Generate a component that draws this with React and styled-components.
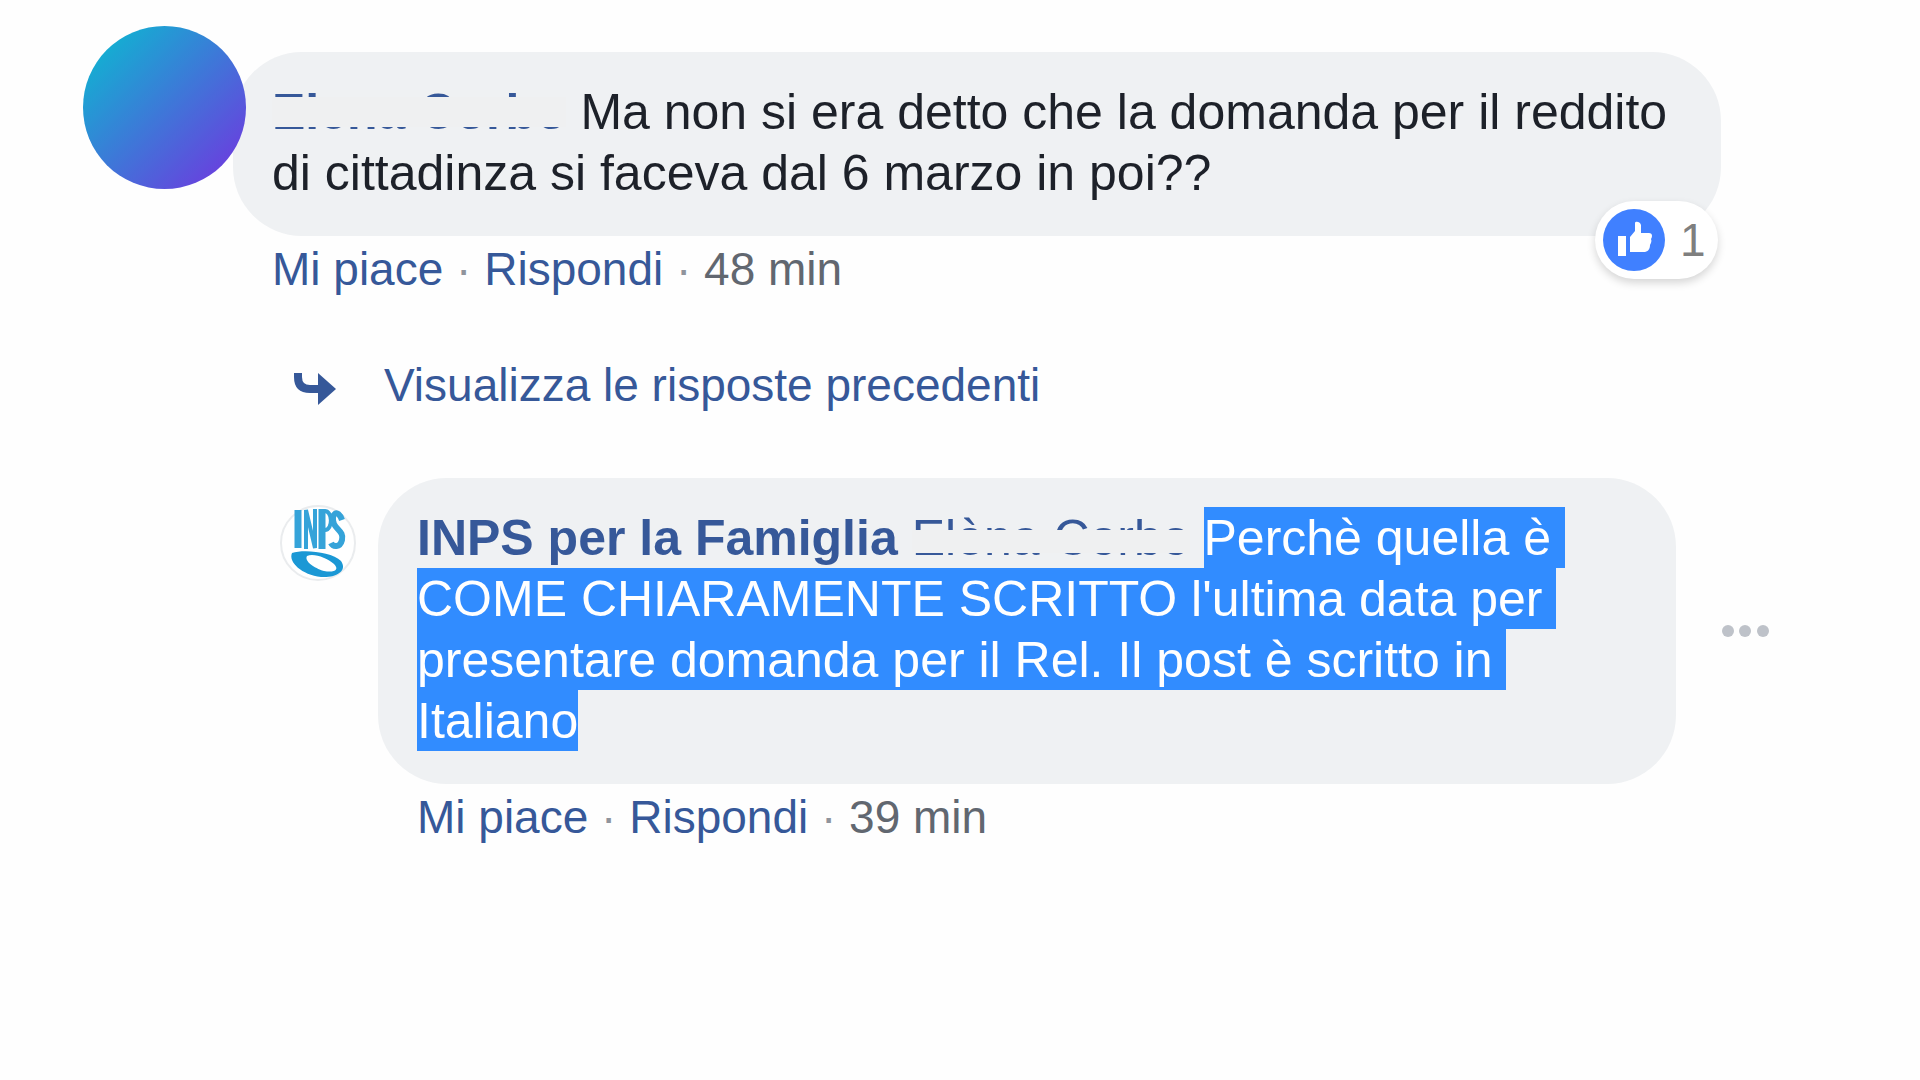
import React from "react";
import styled, { createGlobalStyle } from "styled-components";

const GlobalStyle = createGlobalStyle`
    *, *::before, *::after {
        box-sizing: border-box;
    }

    body {
        background: #fefefe;
        font-family: "Liberation Sans", Arial, sans-serif;
        margin: 0;
    }
`;

const Thread = styled.main`
    display: flex;
    flex-direction: column;
    padding: 26px 199px 40px 83px;
`;

const Comment = styled.article`
    align-items: flex-start;
    display: flex;
`;

const Reply = styled(Comment)`
    margin-left: 197px;
`;

const Avatar = styled.div`
    background: linear-gradient(135deg, #06c0d0, #7530e0);
    border-radius: 50%;
    flex: none;
    height: 163px;
    position: relative;
    width: 163px;
    z-index: 1;
`;

const PageAvatar = styled.svg`
    flex: none;
    height: 76px;
    margin-top: 27px;
    width: 76px;
`;

const Body = styled.div`
    flex: 1;
    margin: ${({ $nested }) => ($nested ? "0 0 0 22px" : "26px 0 0 -13px")};
    min-width: 0;
`;

const Bubble = styled.div`
    background: #eff1f3;
    border-radius: 69px;
    padding: 30px 39px 32px;
    position: relative;
`;

const Message = styled.p`
    color: #1d2129;
    font-size: 50px;
    line-height: 61px;
    margin: 0;
    white-space: pre-wrap;
`;

const Author = styled.a`
    color: #365899;
    font-weight: 700;
    text-decoration: none;
`;

/* name with a strip painted over its letters */
const HiddenName = styled.a`
    color: #365899;
    display: inline-block;
    font-weight: ${({ $bold }) => ($bold ? 700 : 400)};
    position: relative;
    text-decoration: none;

    &::after {
        background: #eff0f1;
        bottom: 16px;
        content: "";
        left: 0;
        position: absolute;
        right: 0;
        top: ${({ $bold }) => ($bold ? "15px" : "22px")};
    }
`;

const Selected = styled.mark`
    background: #318cff;
    box-decoration-break: clone;
    -webkit-box-decoration-break: clone;
    color: #fff;
    padding: 3px 0 2px;
`;

const Actions = styled.footer`
    color: #90949c;
    font-size: 46px;
    line-height: 50px;
    margin: 8px 0 0 39px;
`;

const ActionLink = styled.a`
    color: #365899;
    text-decoration: none;
`;

const Time = styled.time`
    color: #616770;
`;

const Reactions = styled.button`
    align-items: center;
    background: #fff;
    border: 0;
    border-radius: 39px;
    bottom: -43px;
    box-shadow: 0 4px 8px rgba(0, 0, 0, 0.16);
    color: #7f7f7f;
    display: flex;
    font-family: inherit;
    font-size: 46px;
    gap: 15px;
    height: 78px;
    padding: 0 8px;
    position: absolute;
    right: 3px;
    width: 123px;
`;

const LikeIcon = styled.svg`
    flex: none;
    height: 62px;
    width: 62px;
`;

const PreviousReplies = styled.a`
    align-items: center;
    color: #365899;
    display: flex;
    font-size: 46px;
    gap: 48px;
    line-height: 50px;
    margin: 66px 0 68px 211px;
    text-decoration: none;
`;

const ArrowIcon = styled.svg`
    flex: none;
    height: 32px;
    margin-top: 8px;
    width: 42px;
`;

const ReplyRow = styled.div`
    align-items: center;
    display: flex;
    /* the menu button hangs past the column of bubbles */
    margin-right: -48px;
`;

const MoreButton = styled.button`
    background: none;
    border: 0;
    display: flex;
    flex: none;
    margin-left: 46px;
    padding: 0;
`;

function CommentActions({ time }){
    return (
        <Actions>
            <ActionLink href="#">Mi piace</ActionLink> · <ActionLink href="#">Rispondi</ActionLink> · <Time>{time}</Time>
        </Actions>
    );
}

function InpsLogo(){
    return (
        <PageAvatar viewBox="0 0 76 76" role="img" aria-label="INPS">
            <circle cx="38" cy="38" r="37" fill="#fff" stroke="#eaecee" strokeWidth="2" />
            <g fill="none" stroke="#35a3d9">
                <path d="M18 5V43" strokeWidth="7" />
                <path d="M26 44V5L35 43V4" strokeWidth="4" />
                <path d="M42 44V4" strokeWidth="7" />
                <path d="M44 6C53 5 53 25 45 25" strokeWidth="4" />
                <path d="M62 15C58 3 50 9 54 19C57 25 64 27 62 35C60 43 53 42 51 38" strokeWidth="6" />
            </g>
            <path d="M12 48C24 44 52 47 61 56C68 66 56 73 41 72C22 70 8 57 12 48ZM27 51C24 56 34 63 44 66C54 68 60 65 54 59C47 53 34 48 27 51Z" fill="#1b98d5" fillRule="evenodd" />
        </PageAvatar>
    );
}

function App(){
    return (
        <>
            <GlobalStyle />
            <Thread>
                <Comment>
                    <Avatar />
                    <Body>
                        <Bubble>
                            <Message>
                                <HiddenName href="#" $bold>Elena Corbo</HiddenName>
                                {" Ma non si era detto che la domanda per il reddito di cittadinza si faceva dal 6 marzo in poi??"}
                            </Message>
                            <Reactions aria-label="1 Mi piace">
                                <LikeIcon viewBox="0 0 62 62" aria-hidden="true">
                                    <circle cx="31" cy="31" r="31" fill="#4080ff" />
                                    <path d="M15 27H23V47H15ZM27 28L32 22V14C32 12 37 12 38 16V24H46C49 24 50 27 48 30C49 32 48 34 47 36C47 39 46 42 42 43H27Z" fill="#fff" />
                                </LikeIcon>
                                1
                            </Reactions>
                        </Bubble>
                        <CommentActions time="48 min" />
                    </Body>
                </Comment>

                <PreviousReplies href="#">
                    <ArrowIcon viewBox="0 0 42 32" aria-hidden="true">
                        <path d="M4 0V4C4 12 8 16 16 16H25" fill="none" stroke="#365899" strokeWidth="8" />
                        <path d="M24 0L42 16L24 32Z" fill="#365899" />
                    </ArrowIcon>
                    Visualizza le risposte precedenti
                </PreviousReplies>

                <Reply>
                    <InpsLogo />
                    <Body $nested>
                        <ReplyRow>
                            <Bubble>
                                <Message>
                                    <Author href="#">INPS per la Famiglia</Author>
                                    {" "}
                                    <HiddenName href="#">Elèna Corbo</HiddenName>
                                    {" "}
                                    <Selected>Perchè quella è COME CHIARAMENTE SCRITTO l'ultima data per presentare domanda per il Rel. Il post è scritto in Italiano</Selected>
                                </Message>
                            </Bubble>
                            <MoreButton aria-label="Altre opzioni">
                                <svg width="47" height="12" viewBox="0 0 47 12" fill="#bec2c9" aria-hidden="true">
                                    <circle cx="6" cy="6" r="6" />
                                    <circle cx="23" cy="6" r="6" />
                                    <circle cx="41" cy="6" r="6" />
                                </svg>
                            </MoreButton>
                        </ReplyRow>
                        <CommentActions time="39 min" />
                    </Body>
                </Reply>
            </Thread>
        </>
    );
}

export default App;
